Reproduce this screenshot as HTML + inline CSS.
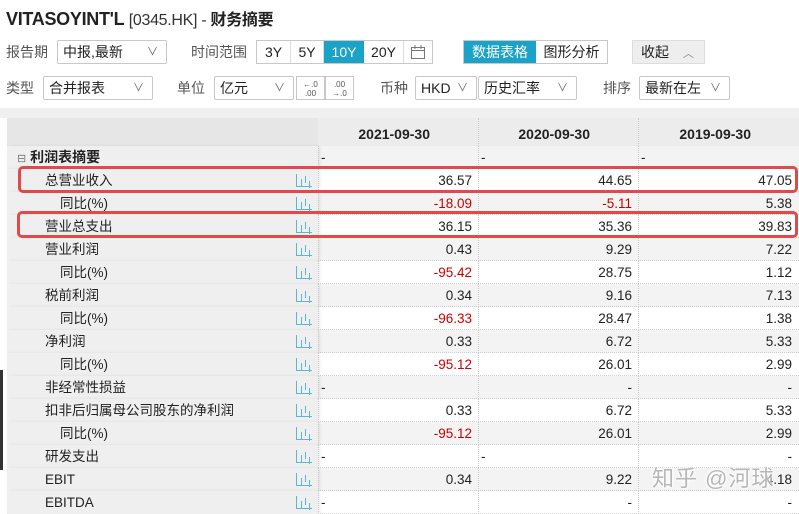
<!DOCTYPE html>
<html><head><meta charset="utf-8"><style>
*{margin:0;padding:0;box-sizing:border-box}
body{width:799px;height:510px;overflow:hidden;background:#fff;font-family:"Liberation Sans","Noto Sans CJK SC",sans-serif;color:#222;position:relative;font-size:13px}
.a{position:absolute}
.sel{position:absolute;height:24px;border:1px solid #c8c8c8;border-radius:2px;background:#fff;font-size:14px;line-height:22px;padding-left:5px}
.sel .v{position:absolute;right:8px;top:0;color:#666;font-size:11px}
.lbl{position:absolute;font-size:14px;color:#555;line-height:24px}
.row{position:absolute;left:7px;width:792px;height:23px;border-bottom:1px dotted #d0d0d0}
.row .n{position:absolute;left:0;width:311px;height:23px;background:#efefef;line-height:23px;font-size:13.5px;padding-left:38px;box-shadow:2px 0 3px rgba(0,0,0,0.08)}
.row .n.s{padding-left:53px}
.row .c{position:absolute;top:0;height:23px;width:160px;line-height:23px;text-align:right;padding-right:6px;font-size:13.5px;border-left:1px dotted #c8c8c8}
.row .c.d{text-align:left;padding-left:2px}
.red{color:#c00}
.ic{position:absolute;left:289px;top:5px;width:16px;height:13px;border-left:1px solid #5bb7d0;border-bottom:1px solid #5bb7d0}
.ic:before{content:"";position:absolute;left:4px;bottom:0;width:1px;height:7px;background:#5bb7d0;box-shadow:4px -3px 0 #5bb7d0,8px 2px 0 #5bb7d0}
.box{position:absolute;border:3px solid #e04a4a;border-radius:5px}
</style></head><body>
<div class="a" style="left:6px;top:6px;font-size:18px;font-weight:bold;letter-spacing:-0.3px">VITASOYINT'L <span style="font-weight:normal;font-size:16px;color:#333">[0345.HK] - </span><span style="font-size:16px">财务摘要</span></div>

<div class="lbl" style="left:6px;top:40px">报告期</div>
<div class="sel" style="left:57px;top:40px;width:110px">中报,最新<span class="v">∨</span></div>
<div class="lbl" style="left:191px;top:40px">时间范围</div>
<div class="a" style="left:256px;top:40px;height:24px;border:1px solid #c8c8c8;display:flex;font-size:14px;line-height:22px">
<span style="width:34px;text-align:center;border-right:1px solid #ddd">3Y</span><span style="width:33px;text-align:center;border-right:1px solid #ddd">5Y</span><span style="width:40px;text-align:center;background:#1aa3c6;color:#fff">10Y</span><span style="width:40px;text-align:center;border-right:1px solid #ddd">20Y</span><span style="width:28px;position:relative"><svg width="16" height="16" style="position:absolute;left:6px;top:3px" fill="none" stroke="#777"><rect x="1.5" y="3.5" width="13" height="11"/><line x1="1.5" y1="6.5" x2="14.5" y2="6.5"/><line x1="5" y1="1" x2="5" y2="5"/><line x1="11" y1="1" x2="11" y2="5"/></svg></span></div>
<div class="a" style="left:463px;top:40px;height:24px;border:1px solid #c8c8c8;display:flex;font-size:14px;line-height:22px">
<span style="width:72px;text-align:center;background:#1aa3c6;color:#fff">数据表格</span><span style="width:71px;text-align:center">图形分析</span></div>
<div class="a" style="left:632px;top:40px;width:73px;height:24px;background:#eee;border:1px solid #ddd;font-size:14px;line-height:22px;padding-left:8px">收起 <span style="color:#888;font-size:11px;margin-left:10px">︿</span></div>

<div class="lbl" style="left:6px;top:76px">类型</div>
<div class="sel" style="left:43px;top:76px;width:110px">合并报表<span class="v">∨</span></div>
<div class="lbl" style="left:177px;top:76px">单位</div>
<div class="sel" style="left:214px;top:76px;width:80px">亿元<span class="v">∨</span></div>
<div class="a" style="left:296px;top:76px;width:29px;height:24px;border:1px solid #c8c8c8;font-size:8px;line-height:9px;text-align:center;padding-top:3px;color:#555">←.0<br>.00</div>
<div class="a" style="left:325px;top:76px;width:29px;height:24px;border:1px solid #c8c8c8;font-size:8px;line-height:9px;text-align:center;padding-top:3px;color:#555">.00<br>→.0</div>
<div class="lbl" style="left:380px;top:76px">币种</div>
<div class="sel" style="left:415px;top:76px;width:62px">HKD<span class="v">∨</span></div>
<div class="sel" style="left:478px;top:76px;width:99px">历史汇率<span class="v">∨</span></div>
<div class="lbl" style="left:603px;top:76px">排序</div>
<div class="sel" style="left:639px;top:76px;width:91px">最新在左<span class="v">∨</span></div>

<div class="a" style="left:0;top:108px;width:799px;height:10px;background:#f0f0f0"></div>
<div class="a" style="left:0;top:370px;width:3px;height:100px;background:#333"></div>
<div class="a" style="left:7px;top:118px;width:311px;height:29px;background:#e6e6e6"></div>
<div class="a" style="left:318px;top:118px;width:481px;height:29px;background:#ececec;font-weight:bold;font-size:14px;line-height:32px">
<span class="a" style="left:0;width:160px;text-align:right;padding-right:48px">2021-09-30</span>
<span class="a" style="left:160px;width:160px;text-align:right;padding-right:48px;border-left:1px dotted #ccc">2020-09-30</span>
<span class="a" style="left:320px;width:161px;text-align:right;padding-right:48px;border-left:1px dotted #ccc">2019-09-30</span></div>

<div id="t"></div>
<script>
var R=[["利润表摘要",0,"-","-","-",2],["总营业收入",0,"36.57","44.65","47.05"],["同比(%)",1,"-18.09","-5.11","5.38",1],["营业总支出",0,"36.15","35.36","39.83"],["营业利润",0,"0.43","9.29","7.22"],["同比(%)",1,"-95.42","28.75","1.12",1],["税前利润",0,"0.34","9.16","7.13"],["同比(%)",1,"-96.33","28.47","1.38",1],["净利润",0,"0.33","6.72","5.33"],["同比(%)",1,"-95.12","26.01","2.99",1],["非经常性损益",0,"-d","-","-"],["扣非后归属母公司股东的净利润",0,"0.33","6.72","5.33"],["同比(%)",1,"-95.12","26.01","2.99",1],["研发支出",0,"-d","-d","-"],["EBIT",0,"0.34","9.22","4.18"],["EBITDA",0,"-d","-","-"]];
var h="";R.forEach(function(r,i){var y=146+i*23;var bg=i%2==0?"#f3f3f3":"#fff";
h+='<div class="row" style="top:'+y+'px;background:'+bg+'">';
if(r[5]==2)h+='<div class="n" style="padding-left:10px;font-weight:bold;font-size:14px"><span style="font-weight:normal;color:#777;font-size:11px">⊟</span> '+r[0]+'</div>';
else h+='<div class="n'+(r[1]?' s':'')+'">'+r[0]+'<span class="ic"></span></div>';
for(var k=0;k<3;k++){var v=r[2+k];var d=(r[5]==2)||v=="-d";if(v=="-d")v="-";
var cl=(r[5]==1&&k<2&&v[0]=="-")?" red":"";
h+='<div class="c'+(d?" d":"")+cl+'" style="left:'+(311+k*160)+'px">'+v+'</div>';}
h+='</div>';});
document.getElementById("t").innerHTML=h;
</script>
<div class="box" style="left:18px;top:166px;width:780px;height:27px"></div>
<div class="box" style="left:17px;top:211px;width:781px;height:27px"></div>
<div class="a" style="left:652px;top:461px;font-size:22px;color:rgba(160,160,160,0.75);letter-spacing:1px;text-shadow:0 0 3px #fff,0 0 3px #fff,0 0 4px #fff">知乎 @河球</div>
</body></html>
